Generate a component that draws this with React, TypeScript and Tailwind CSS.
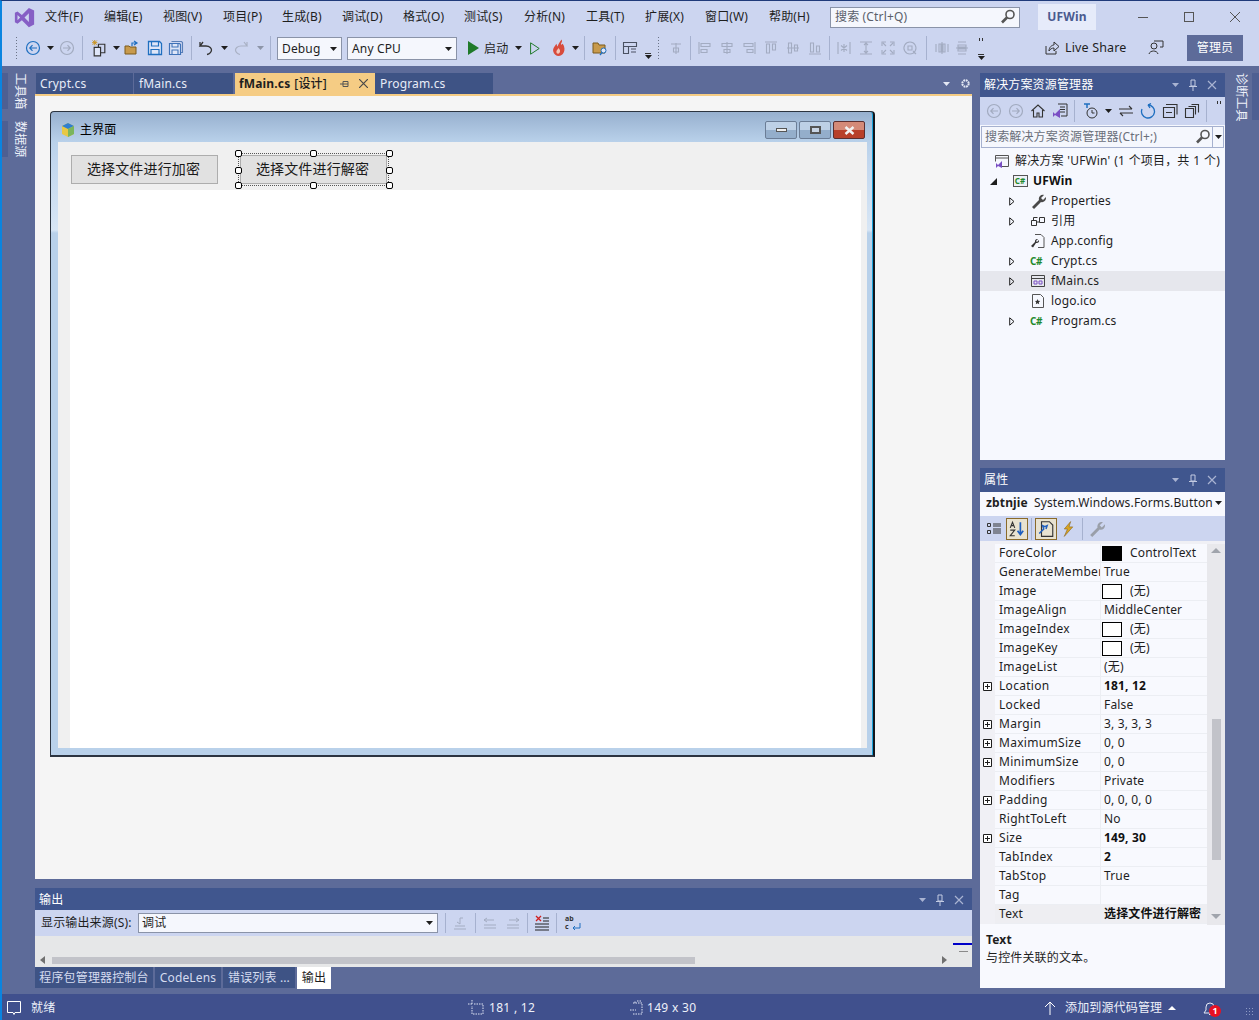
import React from 'react';

const FONT = "font-['Noto_Sans','Noto_Sans_CJK_SC',sans-serif]";

const Svg = ({ children, className = '', w = 16, h = 16, size }: { children: React.ReactNode; className?: string; w?: number; h?: number; size?: [number, number] }) => (
  <svg width={size ? size[0] : w} height={size ? size[1] : h} viewBox={`0 0 ${w} ${h}`} fill="none" className={`shrink-0 ${className}`}>
    {children}
  </svg>
);

const Caret = ({ color = '#1e1e1e' }: { color?: string }) => (
  <svg width="7" height="4" viewBox="0 0 7 4" className="shrink-0">
    <path d="M0 0h7L3.5 4z" fill={color} />
  </svg>
);

const Lens = () => (
  <Svg>
    <circle cx="10" cy="5.5" r="4" stroke="#555" strokeWidth="1.6" fill="#f5f7fd" />
    <path d="M7 8.500 2 13.500" stroke="#555" strokeWidth="2.600" />
  </Svg>
);

const Sep = () => <div className="w-px h-[24px] bg-[#a6b1cf] shrink-0" />;

const Grip = () => (
  <div className="w-[3px] h-[24px] shrink-0 bg-[radial-gradient(#6b7488_0.7px,transparent_0.8px)] bg-[length:3px_3px]" />
);

const Back = ({ on }: { on?: boolean }) => (
  <Svg>
    <circle cx="8" cy="8" r="6.5" stroke={on ? '#1f6fc0' : '#a2abc0'} strokeWidth="1.2" />
    <path d="M12 8H5M7.5 5.2 4.8 8l2.7 2.8" stroke={on ? '#1f6fc0' : '#a2abc0'} strokeWidth="1.2" />
  </Svg>
);

const Fwd = () => (
  <Svg>
    <circle cx="8" cy="8" r="6.5" stroke="#a2abc0" strokeWidth="1.2" />
    <path d="M4 8h7M8.5 5.2 11.2 8l-2.7 2.8" stroke="#a2abc0" strokeWidth="1.2" />
  </Svg>
);

const SaveIcon = () => (
  <Svg>
    <path d="M1.5 1.5h11l2 2v11h-13z" stroke="#1f6fc0" strokeWidth="1.3" fill="#dfe6f8" />
    <path d="M4.5 2v4h7V2M4 14.5V9.5h8v5" stroke="#1f6fc0" strokeWidth="1.2" />
  </Svg>
);

const SaveAllIcon = () => (
  <Svg>
    <path d="M3.5 1.5h10l1 1v10h-2" stroke="#5a7fb8" strokeWidth="1.1" />
    <path d="M1.5 3.5h10l1 1v10h-11z" stroke="#3f72b8" strokeWidth="1.2" fill="#dfe6f8" />
    <path d="M4 4v3h6V4M4 14v-4h6v4" stroke="#3f72b8" strokeWidth="1.1" />
  </Svg>
);

// grey alignment glyphs of the layout toolbar
const Align = ({ d }: { d: string }) => (
  <Svg>
    <path d={d} stroke="#a3acc2" strokeWidth="1.1" />
  </Svg>
);

const Slot = ({ className = '', children }: { className?: string; children?: React.ReactNode }) => (
  <div className={`flex justify-center items-center shrink-0 ${className}`}>{children}</div>
);

const Handle = ({ className }: { className: string }) => (
  <div className={`absolute w-[7px] h-[7px] bg-white border border-black rounded-[2px] ${className}`} />
);

const PanelHeader = ({ title }: { title: string }) => (
  <div className="h-[24px] bg-[#40568e] flex items-center pl-[4px] text-[12px] text-white shrink-0">
    <span className="flex-1">{title}</span>
    <div className="flex items-center gap-[9px] pr-[8px]">
      <Caret color="#a9b3d2" />
      <Svg w={10} h={12}>
        <path d="M3 1h4v6H3zM1 7.500h8M5 8v4" stroke="#c3cbe2" strokeWidth="1" />
      </Svg>
      <Svg w={10} h={10}>
        <path d="M1 1l8 8M9 1 1 9" stroke="#a9b3d2" strokeWidth="1.2" />
      </Svg>
    </div>
  </div>
);

const CSharp = () => <span className="w-[16px] text-[10px] font-bold text-[#1f8a2d] leading-none tracking-[-0.5px]">C#</span>;

const TreeRow = ({ indent, arrow, icon, label, active, bold }: { indent: string; arrow?: 'open' | 'closed'; icon: React.ReactNode; label: string; active?: boolean; bold?: boolean }) => (
  <div className={`h-[20px] flex items-center ${active ? 'bg-[#e6e7ed]' : ''}`}>
    <div className={`${indent} shrink-0 flex justify-end pr-[15px]`}>
      {arrow === 'closed' && (
        <svg width="6" height="9" viewBox="0 0 6 9"><path d="M.7.8 5 4.5.7 8.2z" fill="none" stroke="#1e1e1e" strokeWidth="1" /></svg>
      )}
      {arrow === 'open' && (
        <svg width="7" height="7" viewBox="0 0 7 7"><path d="M7 0v7H0z" fill="#1e1e1e" /></svg>
      )}
    </div>
    <div className="w-[16px] h-[16px] flex items-center justify-center shrink-0 mr-[5px]">{icon}</div>
    <span className={`text-[12px] whitespace-nowrap [word-spacing:0.500px] ${bold ? 'font-bold text-[#111]' : 'text-[#1e1e1e]'}`}>{label}</span>
  </div>
);

const PlusBox = () => (
  <svg width="9" height="9" viewBox="0 0 9 9">
    <path d="M.5.5h8v8h-8zM2 4.500h5M4.500 2v5" stroke="#1e1e1e" strokeWidth="1" fill="#fff" />
  </svg>
);

type Prop = { name: string; value: string; plus?: boolean; swatch?: 'black' | 'white'; bold?: boolean; active?: boolean };

const props: Prop[] = [
  { name: 'ForeColor', value: 'ControlText', swatch: 'black' },
  { name: 'GenerateMember', value: 'True' },
  { name: 'Image', value: '(无)', swatch: 'white' },
  { name: 'ImageAlign', value: 'MiddleCenter' },
  { name: 'ImageIndex', value: '(无)', swatch: 'white' },
  { name: 'ImageKey', value: '(无)', swatch: 'white' },
  { name: 'ImageList', value: '(无)' },
  { name: 'Location', value: '181, 12', plus: true, bold: true },
  { name: 'Locked', value: 'False' },
  { name: 'Margin', value: '3, 3, 3, 3', plus: true },
  { name: 'MaximumSize', value: '0, 0', plus: true },
  { name: 'MinimumSize', value: '0, 0', plus: true },
  { name: 'Modifiers', value: 'Private' },
  { name: 'Padding', value: '0, 0, 0, 0', plus: true },
  { name: 'RightToLeft', value: 'No' },
  { name: 'Size', value: '149, 30', plus: true, bold: true },
  { name: 'TabIndex', value: '2', bold: true },
  { name: 'TabStop', value: 'True' },
  { name: 'Tag', value: '' },
  { name: 'Text', value: '选择文件进行解密', bold: true, active: true },
];

const PropRow = ({ p }: { p: Prop }) => (
  <div className="h-[19px] flex text-[12px] text-[#1e1e1e] leading-[18px]">
    <div className="w-[15px] bg-[#f0f0f5] flex items-center pl-[3px] shrink-0">{p.plus && <PlusBox />}</div>
    <div className={`w-[105px] pl-[4px] border-b border-[#eceef3] overflow-hidden whitespace-nowrap tracking-[0.3px] ${p.active ? 'bg-[#eeeef2]' : ''}`}>{p.name}</div>
    <div className={`w-[107px] border-l border-b border-[#eceef3] pl-[3px] flex items-center whitespace-nowrap ${p.active ? 'bg-[#eeeef2]' : ''} ${p.bold ? 'font-bold text-[#111]' : ''}`}>
      {p.swatch && (
        <div className={`w-[20px] h-[15px] border border-black mr-[8px] ml-[-2px] ${p.swatch === 'black' ? 'bg-black' : 'bg-white'}`} />
      )}
      {p.value}
    </div>
  </div>
);

const BottomTab = ({ label, className, active }: { label: string; className: string; active?: boolean }) => (
  <div className={`flex items-center justify-center text-[12px] whitespace-nowrap shrink-0 ${className} ${active ? 'bg-white text-[#1e1e1e] h-[22px]' : 'bg-[#3e5385] text-[#d5dcf0] h-[21px]'}`}>
    {label}
  </div>
);

const menus = [
  ['文件(F)', 'w-[59px]'],
  ['编辑(E)', 'w-[59px]'],
  ['视图(V)', 'w-[60px]'],
  ['项目(P)', 'w-[59px]'],
  ['生成(B)', 'w-[60px]'],
  ['调试(D)', 'w-[61px]'],
  ['格式(O)', 'w-[61px]'],
  ['测试(S)', 'w-[60px]'],
  ['分析(N)', 'w-[62px]'],
  ['工具(T)', 'w-[59px]'],
  ['扩展(X)', 'w-[60px]'],
  ['窗口(W)', 'w-[64px]'],
  ['帮助(H)', 'w-[61px]'],
];

const WinBtn = ({ className, children }: { className: string; children: React.ReactNode }) => (
  <div className={`w-[32px] h-[18px] rounded-[2px] border flex items-center justify-center ${className}`}>{children}</div>
);

export default function App() {
  return (
    <div className={`w-[1259px] h-[1020px] flex flex-col overflow-hidden bg-[#5d6b99] border-l-[2px] border-[#0a84e0] border-t border-t-[#1f3a7a] tracking-[0.15px] ${FONT}`}>
      {/* menu bar */}
      <div className="h-[31px] bg-[#ccd5f0] flex items-center pt-[1px] text-[12px] text-[#1e1e1e] shrink-0">
        <div className="w-[43px] flex justify-center shrink-0 pl-[2px]">
          <svg width="21" height="23" viewBox="0 0 24 24">
            <path fillRule="evenodd" d="M17 1l6 3v16l-6 3-8-8-5 4-3-1.500v-11L4 5l5 4zM4 9v6l3-3zM17 7l-5 5 5 5z" fill="#865fc5" />
          </svg>
        </div>
        {menus.map(([m, w]) => (
          <div key={m} className={`${w} shrink-0`}>{m}</div>
        ))}
        <div className="w-[190px] h-[21px] bg-[#f5f7fd] border border-[#8a93a8] flex items-center pl-[4px] pr-[3px] text-[#5a5f6b] shrink-0">
          <span className="flex-1">搜索 (Ctrl+Q)</span>
          <Lens />
        </div>
        <div className="w-[58px] h-[26px] ml-[18px] bg-[#e6ebfa] flex items-center justify-center font-bold text-[#4a5a8f] shrink-0">UFWin</div>
        <div className="flex-1 flex items-center justify-between pl-[42px] pr-[19px]">
          <div className="w-[10px] h-px bg-[#555]" />
          <div className="w-[10px] h-[10px] border border-[#555]" />
          <Svg w={10} h={10}><path d="M0 0l10 10M10 0 0 10" stroke="#555" strokeWidth="1" /></Svg>
        </div>
      </div>

      {/* toolbar */}
      <div className="h-[34px] bg-[#ccd5f0] flex items-center pb-[2px] text-[12px] text-[#1e1e1e] shrink-0">
        <Slot className="w-[6px] ml-[11px]"><Grip /></Slot>
        <Slot className="w-[16px] ml-[6px]"><Back on /></Slot>
        <Slot className="w-[18px]"><Caret /></Slot>
        <Slot className="w-[16px]"><Fwd /></Slot>
        <Slot className="w-[14px]"><Sep /></Slot>
        <Slot className="w-[20px]">
          <Svg size={[17, 17]}>
            <path d="M7 4h6v8H7z" stroke="#333" strokeWidth="1.1" />
            <path d="M3 7h6v8H3z" stroke="#333" strokeWidth="1.1" fill="#dfe6f8" />
            <path d="M3.500 0v5M1 2.500h5M1.500.5l4 4M5.500.5l-4 4" stroke="#c8931f" strokeWidth="0.9" />
          </Svg>
        </Slot>
        <Slot className="w-[14px]"><Caret /></Slot>
        <Slot className="w-[18px]">
          <Svg>
            <path d="M1 6h4l1 1h6v7H1z" fill="#c89a4c" stroke="#7a5a1d" />
            <path d="M8 6V3h4M10 1l3 2-3 2" stroke="#1f6fc0" strokeWidth="1.2" />
          </Svg>
        </Slot>
        <Slot className="w-[28px]"><SaveIcon /></Slot>
        <Slot className="w-[14px]"><SaveAllIcon /></Slot>
        <Slot className="w-[16px]"><Sep /></Slot>
        <Slot className="w-[14px]">
          <Svg>
            <path d="M5 2 2 6h6c4 0 5.500 2.500 5.500 4S12 14 9 14.500M2 6V2" stroke="#333" strokeWidth="1.3" />
          </Svg>
        </Slot>
        <Slot className="w-[22px]"><Caret /></Slot>
        <Slot className="w-[12px]">
          <Svg>
            <path d="M11 2l3 4H8c-4 0-5.500 2.500-5.500 4S4 14 7 14.500M14 6V2" stroke="#a9b1c4" strokeWidth="1.2" />
          </Svg>
        </Slot>
        <Slot className="w-[16px] ml-[5px]"><Caret color="#8d95a8" /></Slot>
        <Slot className="w-[4px]"><Sep /></Slot>
        <div className="w-[65px] h-[23px] ml-[5px] bg-[#f5f7fd] border border-[#8a93a8] flex items-center pl-[4px] pr-[4px] pt-[1px] justify-between shrink-0">
          Debug<Caret />
        </div>
        <div className="w-[110px] h-[23px] ml-[5px] bg-[#f5f7fd] border border-[#8a93a8] flex items-center pl-[4px] pr-[4px] pt-[1px] justify-between shrink-0">
          Any CPU<Caret />
        </div>
        <Slot className="w-[22px] ml-[5px]">
          <svg width="11" height="14" viewBox="0 0 11 14"><path d="M0 0l11 7-11 7z" fill="#1f7a2a" /></svg>
        </Slot>
        <div className="w-[30px] pt-[1px] shrink-0">启动</div>
        <Slot className="w-[8px]"><Caret /></Slot>
        <Slot className="w-[26px]">
          <svg width="10" height="13" viewBox="0 0 10 13"><path d="M.6.800l8.600 5.700-8.600 5.700z" fill="none" stroke="#1f7a2a" strokeWidth="1" /></svg>
        </Slot>
        <Slot className="w-[20px]">
          <Svg size={[17, 20]}>
            <path d="M11 0c1 3-1 3-.5 5 1-.5 1.500-1 1.500-1 2 3 2 6 1 8-1 2.500-3 3.500-5 3.500S3.500 14 3 11c-.5-3 2-5 3-7 .5 1 .5 2 1 2.500C8 4.500 9 2 11 0z" fill="#d84b3c" />
            <path d="M8 8c1.500 1.500 2 3 1 4.500S6 13.500 6 11.500C6 10 7.500 9.500 8 8z" fill="#f4c7b8" />
          </Svg>
        </Slot>
        <Slot className="w-[14px]"><Caret /></Slot>
        <Slot className="w-[4px]"><Sep /></Slot>
        <Slot className="w-[28px]">
          <Svg>
            <path d="M1 3h5l1 2h6v8H1z" fill="#c89a4c" stroke="#7a5a1d" />
            <circle cx="11.500" cy="10.500" r="2.500" fill="#dfe6f8" stroke="#1f6fc0" />
            <path d="M10 12.500 8 15" stroke="#1f6fc0" strokeWidth="1.300" />
          </Svg>
        </Slot>
        <Slot className="w-[2px]"><Sep /></Slot>
        <Slot className="w-[28px]">
          <Svg>
            <path d="M1.500 2.500h13v4h-13zM1.500 6.500v7h5v-7M9 9h5M9 12h5" stroke="#4a5162" strokeWidth="1.100" />
          </Svg>
        </Slot>
        <div className="w-[8px] flex flex-col items-center justify-end h-[22px] gap-[1px] shrink-0">
          <div className="w-[6px] h-px bg-[#333]" /><Caret />
        </div>
        <Slot className="w-[12px]"><Grip /></Slot>
        <Slot className="w-[24px]"><Align d="M8 3v11M3 4h10M5.500 8h5v4h-5z" /></Slot>
        <Slot className="w-[4px]"><Sep /></Slot>
        <Slot className="w-[22px] ml-[2px]"><Align d="M2 2v12M4 3.500h9v3H4zM4 9.500h6v3H4z" /></Slot>
        <Slot className="w-[22px]"><Align d="M8 2v12M3 3.500h10v3H3zM5 9.500h6v3H5z" /></Slot>
        <Slot className="w-[22px]"><Align d="M14 2v12M3 3.500h9v3H3zM6 9.500h6v3H6z" /></Slot>
        <Slot className="w-[22px]"><Align d="M2 2h12M3.500 4v9h3V4zM9.500 4v6h3V4z" /></Slot>
        <Slot className="w-[22px]"><Align d="M2 8h12M3.500 3v10h3V3zM9.500 5v6h3V5z" /></Slot>
        <Slot className="w-[22px]"><Align d="M2 14h12M3.500 3v9h3V3zM9.500 6v6h3V6z" /></Slot>
        <Slot className="w-[6px]"><Sep /></Slot>
        <Slot className="w-[22px] ml-[1px]"><Align d="M2 2v12M14 2v12M8 4v8M5 5.500l6 5M11 5.500l-6 5" /></Slot>
        <Slot className="w-[22px]"><Align d="M2 2h12M2 14h12M8 3v10M6 5l2-2 2 2M6 11l2 2 2-2" /></Slot>
        <Slot className="w-[22px]"><Align d="M2 6V2h4M10 2h4v4M14 10v4h-4M6 14H2v-4M3 3l3 3M13 3l-3 3M3 13l3-3M13 13l-3-3" /></Slot>
        <Slot className="w-[22px]"><Align d="M8 2a6 6 0 1 1-.1 0zM6 6h4v4H6zM11 11l3 3" /></Slot>
        <Slot className="w-[10px]"><Sep /></Slot>
        <Slot className="w-[22px]"><Align d="M2 4v8M14 4v8M5 4h2v8H5zM9 4h2v8H9zM8 2v12" /></Slot>
        <Slot className="w-[18px]"><Align d="M4 2h8M4 14h8M4 5h8v2H4zM4 9h8v2H4zM2 8h12" /></Slot>
        <div className="w-[16px] ml-[2px] h-[24px] flex flex-col items-center justify-between shrink-0">
          <div className="flex gap-[2px] mt-[2px]"><div className="w-px h-[3px] bg-[#333]" /><div className="w-px h-[3px] bg-[#333]" /></div>
          <div className="flex flex-col items-center gap-[1px]"><div className="w-[6px] h-px bg-[#333]" /><Caret /></div>
        </div>
        <div className="flex-1" />
        <Svg className="mr-[5px]">
          <path d="M2 6v8h10V11M5 11c0-4 3-6 5-6V2l5 4.500L10 11V8c-2 0-4 1-5 3z" stroke="#333" strokeWidth="1" />
        </Svg>
        <span className="text-[12.500px] pt-[1px] w-[83px] shrink-0">Live Share</span>
        <Svg className="mr-[23px]">
          <circle cx="6" cy="6" r="3" stroke="#333" />
          <path d="M1 14c1-4 8-4 9 0M6 1h9v6h-3" stroke="#333" />
        </Svg>
        <div className="w-[56px] h-[26px] mr-[16px] bg-[#5d6b99] flex items-center justify-center text-white shrink-0">管理员</div>
      </div>

      {/* body */}
      <div className="flex-1 flex min-h-0">
        {/* left rail */}
        <div className="w-[33px] shrink-0 pt-[7px] flex flex-col gap-[12px]">
          <div className="flex h-[36px]">
            <div className="w-[6px] bg-[#4e5f92]" />
            <div className="ml-[5px] [writing-mode:vertical-rl] [text-orientation:sideways] text-[12px] leading-[14px] text-[#eef1fa] whitespace-nowrap">工具箱</div>
          </div>
          <div className="flex h-[36px]">
            <div className="w-[6px] bg-[#4e5f92]" />
            <div className="ml-[5px] [writing-mode:vertical-rl] [text-orientation:sideways] text-[12px] leading-[14px] text-[#eef1fa] whitespace-nowrap">数据源</div>
          </div>
        </div>

        {/* document + output column */}
        <div className="w-[937px] shrink-0 flex flex-col pt-[7px]">
          <div className="h-[21px] flex items-stretch text-[12px] text-[#e8ecf8] shrink-0">
            <div className="w-[97px] ml-[1px] bg-[#3e5385] pl-[4px] flex items-center">Crypt.cs</div>
            <div className="w-[99px] ml-[1px] bg-[#3e5385] pl-[5px] flex items-center">fMain.cs</div>
            <div className="w-[140px] ml-[2px] bg-[#f5cc84] pl-[4px] flex items-center text-[#1e1e1e]">
              <span className="font-bold">fMain.cs</span>
              <span className="ml-[4px] font-medium">[设计]</span>
              <Svg w={10} h={10} className="ml-[13px]"><path d="M0 5h3M3 2.500v5h5v-5zM3 5h5" stroke="#555" strokeWidth="1" /></Svg>
              <Svg w={9} h={9} className="ml-[9px]"><path d="M0 0l9 9M9 0 0 9" stroke="#4a4a4a" strokeWidth="1.200" /></Svg>
            </div>
            <div className="w-[118px] bg-[#3e5385] pl-[5px] flex items-center">Program.cs</div>
            <div className="flex-1 flex items-center justify-end gap-[10px] pr-[1px]">
              <Caret color="#e4e8f4" />
              <Svg w={11} h={11}>
                <circle cx="5.500" cy="5.500" r="3.200" stroke="#e4e8f4" strokeWidth="2" strokeDasharray="1.800 0.700" />
              </Svg>
            </div>
          </div>
          <div className="h-[2px] bg-[#f5cc84] shrink-0" />

          {/* designer surface */}
          <div className="h-[783px] bg-[#f5f5f5] pl-[15px] pt-[15px] shrink-0">
            <div className="w-[825px] h-[646px] border-[2px] border-[#2c3440] border-t border-l border-r-[#11161c] rounded-t-[4px] shadow-[inset_-1px_0_0_#19a0d8] bg-[linear-gradient(180deg,#97b0cf_0px,#b9d1ea_30px,#c2d7ee_50px,#d8e6f5_118px,#b9d1ea_121px,#b9d1ea_100%)] flex flex-col pl-[7px] pr-[6px] pb-[7px]">
              <div className="h-[30px] pt-[6px] flex items-center text-[12px] text-black shrink-0">
                <Svg className="ml-[2px] mr-[4px]">
                  <path d="M8 1l6 3v8l-6 3-6-3V4z" fill="#e8c844" />
                  <path d="M8 1l6 3-6 3-6-3z" fill="#2f7fd0" />
                  <path d="M8 7l6-3v8l-6 3z" fill="#7ab55c" />
                </Svg>
                主界面
                <div className="ml-auto mr-[2px] flex gap-[2px]">
                  <WinBtn className="border-[#6b7d96] bg-[linear-gradient(180deg,#bdd0e6_50%,#94aecb_50%)]">
                    <div className="w-[11px] h-[4px] bg-[#f0f0f0] border border-[#555]" />
                  </WinBtn>
                  <WinBtn className="border-[#6b7d96] bg-[linear-gradient(180deg,#bdd0e6_50%,#94aecb_50%)]">
                    <div className="w-[11px] h-[8px] bg-[#c8d4e4] border-[2px] border-[#555]" />
                  </WinBtn>
                  <WinBtn className="border-[#5b2f30] bg-[linear-gradient(180deg,#d48a78_50%,#b8402a_50%)]">
                    <Svg w={11} h={9}><path d="M1.500 1l8 7M9.500 1l-8 7" stroke="#f2f2f2" strokeWidth="2.500" /></Svg>
                  </WinBtn>
                </div>
              </div>
              <div className="flex-1 bg-[#f0f0f0] flex flex-col pl-[12px] pr-[6px] min-h-0">
                <div className="h-[48px] flex items-start pt-[13px] pl-[1px] gap-[22px] shrink-0">
                  <div className="w-[147px] h-[29px] bg-[#e1e1e1] border border-[#adadad] flex items-center justify-center pb-[3px] pr-[2px] text-[14px] text-[#1a1a1a]">选择文件进行加密</div>
                  <div className="w-[147px] h-[29px] bg-[#e1e1e1] border border-[#adadad] flex items-center justify-center pb-[3px] pr-[2px] text-[14px] text-[#1a1a1a] relative">
                    选择文件进行解密
                    <div className="absolute left-[-3px] top-[-3px] right-[-3px] bottom-[-3px] border border-dotted border-[#555]" />
                    <Handle className="left-[-6px] top-[-6px]" />
                    <Handle className="left-[69px] top-[-6px]" />
                    <Handle className="right-[-7px] top-[-6px]" />
                    <Handle className="left-[-6px] top-[11px]" />
                    <Handle className="right-[-7px] top-[11px]" />
                    <Handle className="left-[-6px] bottom-[-6px]" />
                    <Handle className="left-[69px] bottom-[-6px]" />
                    <Handle className="right-[-7px] bottom-[-6px]" />
                  </div>
                </div>
                <div className="flex-1 bg-white" />
              </div>
            </div>
          </div>

          <div className="h-[9px] shrink-0" />

          {/* output */}
          <div className="h-[79px] flex flex-col shrink-0">
            <PanelHeader title="输出" />
            <div className="h-[26px] mt-[-2px] bg-[#ccd5f0] flex items-center pl-[6px] text-[12px] text-[#1e1e1e] shrink-0">
              <span className="w-[97px] shrink-0 whitespace-nowrap">显示输出来源(S):</span>
              <div className="w-[300px] h-[20px] bg-[#f5f7fd] border border-[#8a93a8] flex items-center justify-between pl-[3px] pr-[4px] shrink-0">
                调试<Caret />
              </div>
              <div className="w-px h-[20px] bg-[#a6b1cf] ml-[7px] shrink-0" />
              <Svg className="ml-[6px]"><path d="M2 14h12M3 11h10M8 3v6l-3-2M8 3h3" stroke="#a3acc2" /></Svg>
              <div className="w-px h-[20px] bg-[#a6b1cf] ml-[7px] shrink-0" />
              <Svg className="ml-[6px]"><path d="M2 10h12M2 13h12M2 5h10M2 5l3-2M2 5l3 2" stroke="#a3acc2" /></Svg>
              <Svg className="ml-[7px]"><path d="M2 10h12M2 13h12M4 5h10M14 5l-3-2M14 5l-3 2" stroke="#a3acc2" /></Svg>
              <div className="w-px h-[20px] bg-[#a6b1cf] ml-[6px] shrink-0" />
              <Svg className="ml-[6px]"><path d="M9 3h6M9 6h6M1 9h14M1 12h14M1 15h14" stroke="#222" /><path d="M2 1l5 5M7 1 2 6" stroke="#d02020" strokeWidth="1.300" /></Svg>
              <div className="w-px h-[20px] bg-[#a6b1cf] ml-[6px] shrink-0" />
              <div className="ml-[8px] w-[16px] flex flex-col shrink-0 text-[7px] leading-[8px] font-bold text-[#333]">
                <span>ab</span>
                <div className="flex items-center">
                  <span>c</span>
                  <svg width="11" height="8" viewBox="0 0 11 8" className="ml-[1px]"><path d="M10 0v5H3M5 3 3 5l2 2" fill="none" stroke="#1f6fc0" /></svg>
                </div>
              </div>
            </div>
            <div className="flex-1 bg-[#e6e7e8] flex flex-col justify-end relative">
              <div className="absolute right-0 top-[7px] w-[19px] h-[2px] bg-[#0000c8]" />
              <div className="absolute right-[4px] top-[15px] w-[9px] h-px bg-[#8a8a8a]" />
              <div className="h-[14px] flex items-center justify-between px-[5px]">
                <svg width="5" height="8" viewBox="0 0 5 8"><path d="M5 0v8L0 4z" fill="#707070" /></svg>
                <div className="absolute left-[17px] w-[643px] h-[7px] bg-[#c2c3c9]" />
                <svg width="5" height="8" viewBox="0 0 5 8" className="mr-[20px]"><path d="M0 0v8l5-4z" fill="#707070" /></svg>
              </div>
            </div>
          </div>

          <div className="flex items-start gap-[2px] shrink-0">
            <BottomTab label="程序包管理器控制台" className="w-[118px]" />
            <BottomTab label="CodeLens" className="w-[66px]" />
            <BottomTab label="错误列表 ..." className="w-[72px]" />
            <BottomTab label="输出" className="w-[34px]" active />
          </div>
        </div>

        {/* right panels */}
        <div className="w-[245px] ml-[8px] shrink-0 flex flex-col pt-[7px]">
          <div className="h-[387px] flex flex-col shrink-0 bg-[#f6f8fe]">
            <PanelHeader title="解决方案资源管理器" />
            <div className="h-[28px] bg-[#ccd5f0] flex items-center pl-[6px] gap-[6px] shrink-0">
              <Back /><Fwd />
              <Svg><path d="M1.500 8 8 2l6.500 6M3.500 7v7h3.500v-4h2v4h3.500V7" stroke="#333" strokeWidth="1.100" /></Svg>
              <Svg><path d="M6 1h9v12H9M8 4h5M8 6.500h5M8 9h5" stroke="#333" /><path d="M1 9l2 2 5-5v9l-5-3-2 2z" fill="#7a4fc4" /></Svg>
              <div className="w-px h-[22px] bg-[#a6b1cf] mr-[2px]" />
              <Svg><circle cx="9" cy="10" r="5" stroke="#333" /><path d="M9 7v3h2.500" stroke="#333" /><path d="M1 1h6M4 1v4" stroke="#1f6fc0" strokeWidth="1.500" /></Svg>
              <Caret />
              <Svg><path d="M1 6h13M11 3l3 3M2 10h13M5 13l-3-3" stroke="#333" strokeWidth="1.100" /></Svg>
              <Svg><path d="M8 2a6.500 6.500 0 1 1-6 4M8 2l3-1.500M8 2l2 3" stroke="#1f6fc0" strokeWidth="1.300" /></Svg>
              <Svg><path d="M1.500 4.500h11v10h-11zM4 1.500h11v10M4 9.500h6" stroke="#333" strokeWidth="1.100" /></Svg>
              <Svg><path d="M1.500 5.500h8v9h-8zM4.500 3.500h7v8M7.500 1.500h7v8" stroke="#333" strokeWidth="1.100" /></Svg>
              <div className="w-px h-[22px] bg-[#a6b1cf]" />
              <div className="flex gap-[2px] self-start mt-[4px] ml-[4px]"><div className="w-px h-[3px] bg-[#333]" /><div className="w-px h-[3px] bg-[#333]" /></div>
            </div>
            <div className="h-[22px] mt-[1px] mx-[1px] bg-[#f5f7fd] border border-[#a6b1cf] flex items-center pl-[3px] text-[12px] text-[#6a6f7a] shrink-0">
              <span className="flex-1 whitespace-nowrap">搜索解决方案资源管理器(Ctrl+;)</span>
              <Lens />
              <div className="w-[11px] h-full border-l border-[#a6b1cf] flex items-center justify-center ml-[1px]"><Caret /></div>
            </div>
            <div className="pt-[3px] flex-1">
              <TreeRow indent="w-[14px] !pr-0" label="解决方案 'UFWin' (1 个项目，共 1 个)" icon={
                <Svg><path d="M1.500 2.500h13v11h-7M1.500 2.500v6M1.500 5h13" stroke="#555" /><path d="M2 10l2 2 4-4v7l-4-2-2 2z" fill="#7a4fc4" /></Svg>
              } />
              <TreeRow indent="w-[32px]" arrow="open" bold label="UFWin" icon={
                <div className="w-[15px] h-[12px] border border-[#555] bg-[#eef1f6] text-[8px] font-bold text-[#1f8a2d] flex items-center justify-center leading-none">C#</div>
              } />
              <TreeRow indent="w-[50px]" arrow="closed" label="Properties" icon={
                <Svg><path d="M2 14l7-7c-1-3 2-6 5-5l-3 3 2 2 3-3c.5 3-2 6-5 5l-7 7z" fill="#4a4a4a" /></Svg>
              } />
              <TreeRow indent="w-[50px]" arrow="closed" label="引用" icon={
                <Svg><path d="M1.500 7.500h5v5h-5zM9.500 4.500h5v5h-5zM6.500 9h3M3.500 7.500v-3h4" stroke="#333" /></Svg>
              } />
              <TreeRow indent="w-[50px]" label="App.config" icon={
                <Svg><path d="M5 1.500h6l3 3v10H8" stroke="#555" /><path d="M1 13l4-4c-.5-2 1-3.500 3-3L6 8l1 1 2-2c.5 2-1 3.500-3 3l-3 4.500z" fill="#333" /></Svg>
              } />
              <TreeRow indent="w-[50px]" arrow="closed" label="Crypt.cs" icon={<CSharp />} />
              <TreeRow indent="w-[50px]" arrow="closed" active label="fMain.cs" icon={
                <Svg><path d="M1.500 2.500h13v11h-13zM1.500 5.500h13" stroke="#444" /><path d="M4 8h3v3H4zM9 8h3v3H9z" stroke="#7a4fc4" /></Svg>
              } />
              <TreeRow indent="w-[50px]" label="logo.ico" icon={
                <Svg><path d="M2.500 1.500h8l3 3v10h-11z" stroke="#555" /><path d="M7.500 6l.8 1.800 1.900.2-1.400 1.300.4 1.900-1.700-1-1.700 1 .4-1.900L5 8l1.900-.2z" fill="#333" /></Svg>
              } />
              <TreeRow indent="w-[50px]" arrow="closed" label="Program.cs" icon={<CSharp />} />
            </div>
          </div>

          <div className="h-[8px] shrink-0" />

          <div className="h-[520px] flex flex-col shrink-0 bg-[#f8f9fe]">
            <PanelHeader title="属性" />
            <div className="h-[24px] flex items-center pb-[2px] pl-[6px] text-[12px] text-[#1e1e1e] whitespace-nowrap shrink-0">
              <span className="font-bold mr-[6px]">zbtnjie</span>
              <span className="flex-1">System.Windows.Forms.Button</span>
              <div className="mr-[3px]"><Caret /></div>
            </div>
            <div className="h-[25px] bg-[#ccd5f0] flex items-center pl-[6px] shrink-0">
              <Svg className="mr-[4px]"><path d="M1.500 2.500h3v3h-3zM1.500 9.500h3v3h-3zM7 3h8M7 5h8M7 8h8M7 10h8M7 12h8" stroke="#333" /></Svg>
              <div className="w-[22px] h-[22px] border border-[#8a6a2a] bg-[#e8e2d0] flex items-center justify-center">
                <Svg size={[18, 18]}><path d="M2 7l2-5 2 5M2.800 5h2.400M2 9h4l-4 5h4" stroke="#333" /><path d="M11 2v10M8.500 9.500 11 13l2.500-3.500" stroke="#1f5fc0" strokeWidth="1.500" /></Svg>
              </div>
              <div className="w-px h-[22px] bg-[#a6b1cf] mx-[3px]" />
              <div className="w-[22px] h-[22px] border border-[#8a6a2a] bg-[#e8e2d0] flex items-center justify-center">
                <Svg size={[18, 18]}><path d="M4 1.500h7l3 3v10H4z" stroke="#333" /><path d="M2 12l4-4-1-3 2 1 2-1-1 3" stroke="#1f5fc0" strokeWidth="1.300" /></Svg>
              </div>
              <Svg className="ml-[3px]" size={[17, 18]}><path d="M10 1 4 8h3l-3 7 8-9H8.500z" fill="#d9a520" stroke="#8a6a2a" strokeWidth="0.600" /></Svg>
              <div className="w-px h-[22px] bg-[#a6b1cf] ml-[5px] mr-[5px]" />
              <Svg size={[17, 17]}><path d="M2 14l7-7c-1-3 2-6 5-5l-3 3 2 2 3-3c.5 3-2 6-5 5l-7 7z" fill="#9a9fa9" /></Svg>
            </div>
            <div className="h-[384px] flex pt-[3px] overflow-hidden shrink-0 bg-[#f0f0f5]">
              <div className="w-[227px] shrink-0 bg-[#f8f9fe]">
                {props.map((p) => <PropRow key={p.name} p={p} />)}
              </div>
              <div className="flex-1 bg-[#e8e8ec] flex flex-col items-center pt-[4px]">
                <svg width="10" height="5" viewBox="0 0 10 5"><path d="M5 0l5 5H0z" fill="#a0a4ac" /></svg>
                <div className="mt-[166px] w-[9px] h-[141px] bg-[#c2c3c9]" />
                <svg width="10" height="5" viewBox="0 0 10 5" className="mt-[54px]"><path d="M0 0h10L5 5z" fill="#a0a4ac" /></svg>
              </div>
            </div>
            <div className="flex-1 pl-[6px] pt-[6px] text-[12px] text-[#1e1e1e] leading-[18px]">
              <div className="font-bold">Text</div>
              <div>与控件关联的文本。</div>
            </div>
          </div>
        </div>

        {/* right rail */}
        <div className="flex-1 pt-[7px] pl-[9px] flex">
          <div className="[writing-mode:vertical-rl] [text-orientation:sideways] text-[12px] leading-[14px] text-[#eef1fa] whitespace-nowrap h-[48px]">诊断工具</div>
          <div className="w-[7px] h-[47px] ml-[4px] bg-[#4e5f92]" />
        </div>
      </div>

      {/* status bar */}
      <div className="h-[26px] bg-[#40508d] flex items-center pt-[1px] text-[12px] text-[#eef1fa] shrink-0">
        <Svg className="ml-[4px] mr-[9px]"><path d="M1.500 1.500h13v11H9l-1 2-1-2H1.500z" stroke="#fff" /></Svg>
        <span className="w-[437px] shrink-0">就绪</span>
        <Svg className="mr-[5px]"><path d="M4 0v4M0 4h4M6 4h9v10H4V6" stroke="#dfe4f4" strokeDasharray="1.500 1" /></Svg>
        <span className="w-[139px] shrink-0 tracking-[0.3px]">181 , 12</span>
        <Svg className="mr-[3px]"><path d="M5 3h9v11H5M2 10h6M7 3V1M9 1h5" stroke="#dfe4f4" strokeDasharray="1.500 1" /></Svg>
        <span className="w-[395px] shrink-0 tracking-[0.3px]">149 x 30</span>
        <Svg className="mr-[7px]"><path d="M8 15V2M3 7l5-5 5 5" stroke="#fff" /></Svg>
        <span className="mr-[6px] whitespace-nowrap">添加到源代码管理</span>
        <svg width="8" height="4" viewBox="0 0 8 4" className="shrink-0"><path d="M4 0l4 4H0z" fill="#fff" /></svg>
        <div className="relative ml-[26px] shrink-0">
          <Svg><path d="M2 13h12l-2-3V7a4 4 0 0 0-8 0v3zM7 14.500h2" stroke="#e6eaf6" /></Svg>
          <div className="absolute left-[7px] top-[5px] w-[12px] h-[12px] rounded-full bg-[#e81123] text-[9px] leading-[12px] text-center font-bold text-white">1</div>
        </div>
        <div className="ml-auto mr-[5px] mt-[8px] w-[9px] h-[9px] bg-[radial-gradient(#8f9bc4_0.7px,transparent_0.8px)] bg-[length:3px_3px] shrink-0" />
      </div>
    </div>
  );
}
